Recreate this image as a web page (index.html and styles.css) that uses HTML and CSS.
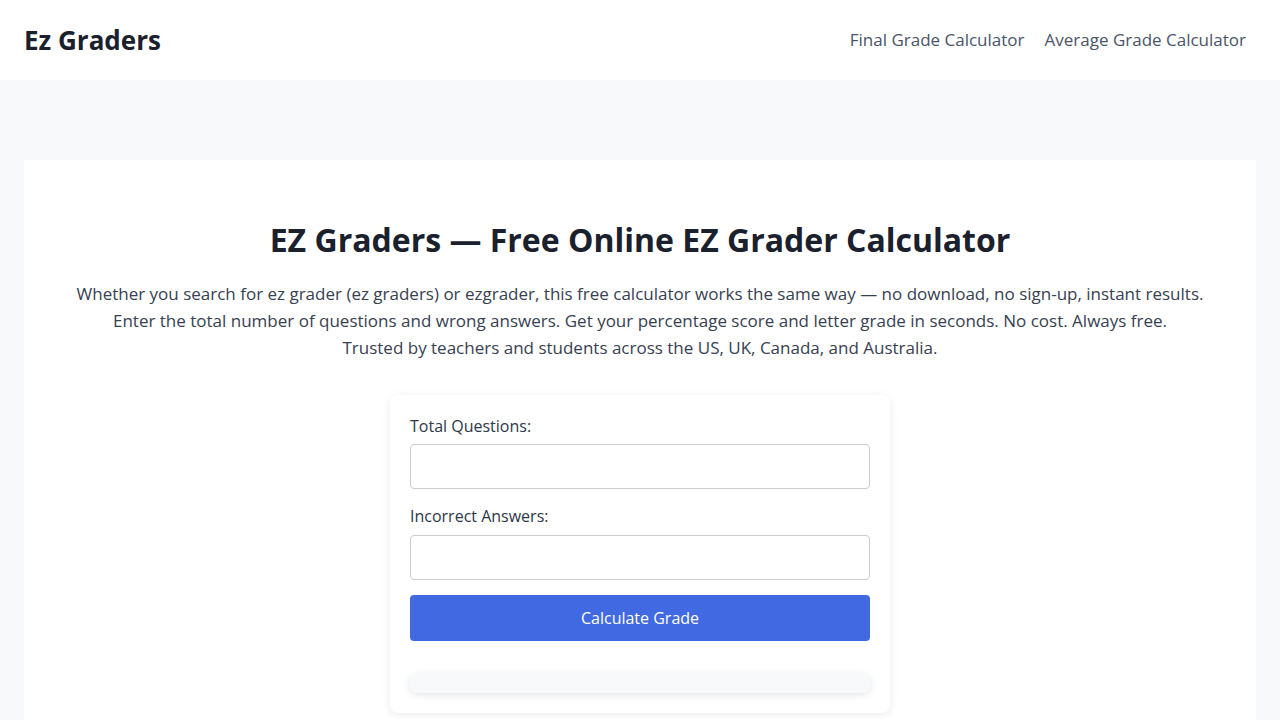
FILE: index.html
```html
<!DOCTYPE html>
<html lang="en">
<head>
    <meta charset="UTF-8">
    <meta name="viewport" content="width=device-width, initial-scale=1.0">
    <title>EZ Graders - Free Online EZ Grader Calculator</title>
    <link rel="stylesheet" href="styles.css">
</head>
<body>
    <header class="header">
        <a class="logo" href="#">Ez Graders</a>
        <nav class="nav">
            <a href="#">Final Grade Calculator</a>
            <a href="#">Average Grade Calculator</a>
        </nav>
    </header>

    <main class="page">
        <section class="card">
            <h1>EZ Graders — Free Online EZ Grader Calculator</h1>
            <p class="intro">
                Whether you search for ez grader (ez graders) or ezgrader, this free calculator works the same way — no download, no sign-up, instant results.<br>
                Enter the total number of questions and wrong answers. Get your percentage score and letter grade in seconds. No cost. Always free.<br>
                Trusted by teachers and students across the US, UK, Canada, and Australia.
            </p>

            <!-- calculator -->
            <div class="calculator">
                <label for="total">Total Questions:</label>
                <input type="number" id="total">
                <label for="wrong">Incorrect Answers:</label>
                <input type="number" id="wrong">
                <button class="calc-btn">Calculate Grade</button>
                <div class="result"></div>
            </div>
        </section>
    </main>
</body>
</html>
```

FILE: styles.css
```css
* {
    box-sizing: border-box;
}

body {
    margin: 0;
    font-family: 'Open Sans', 'Noto Sans', sans-serif;
    background: #f8f9fb;
    color: #1a202c;
}

a {
    text-decoration: none;
}

.header {
    background: #ffffff;
    height: 80px;
    padding: 0 24px;
    display: flex;
    align-items: center;
    justify-content: space-between;
}

.logo {
    font-size: 26px;
    font-weight: 700;
    line-height: 1;
    color: #1a202c;
}

.nav {
    display: flex;
    margin-bottom: 2px;
}

.nav a {
    color: #4a5568;
    font-size: 17px;
    padding: 0 10px;
}

.page {
    padding: 80px 24px 0;
}

.card {
    background: #ffffff;
    padding: 40px 40px 40px;
    text-align: center;
}

.card h1 {
    font-size: 32px;
    line-height: 1.2;
    font-weight: 700;
    margin: 21px 0;
    color: #1a202c;
}

.intro {
    font-size: 17px;
    line-height: 27px;
    color: #374151;
    margin: 0 0 34px;
}

.calculator {
    width: 500px;
    margin: 0 auto;
    padding: 20px;
    background: #ffffff;
    border-radius: 8px;
    box-shadow: 0 2px 10px rgba(0, 0, 0, 0.08);
    text-align: left;
}

.calculator label {
    display: block;
    font-size: 16px;
    line-height: 22px;
    color: #2d3748;
    margin-bottom: 7px;
}

.calculator input + label {
    margin-bottom: 8px;
}

.calculator input {
    display: block;
    width: 100%;
    height: 45px;
    padding: 10px;
    font-family: inherit;
    font-size: 16px;
    border: 1px solid #cccccc;
    border-radius: 4px;
    margin-bottom: 16px;
}

.calculator input + label + input {
    margin-bottom: 15px;
}

.calc-btn {
    display: block;
    width: 100%;
    height: 46px;
    margin-top: 0;
    background: #4169e1;
    color: #ffffff;
    border: none;
    border-radius: 4px;
    font-family: inherit;
    font-size: 16px;
    cursor: pointer;
}

.result {
    margin-top: 32px;
    height: 20px;
    background: #f8f9fa;
    border-radius: 8px;
    box-shadow: 0 2px 8px rgba(0, 0, 0, 0.1);
}
```
